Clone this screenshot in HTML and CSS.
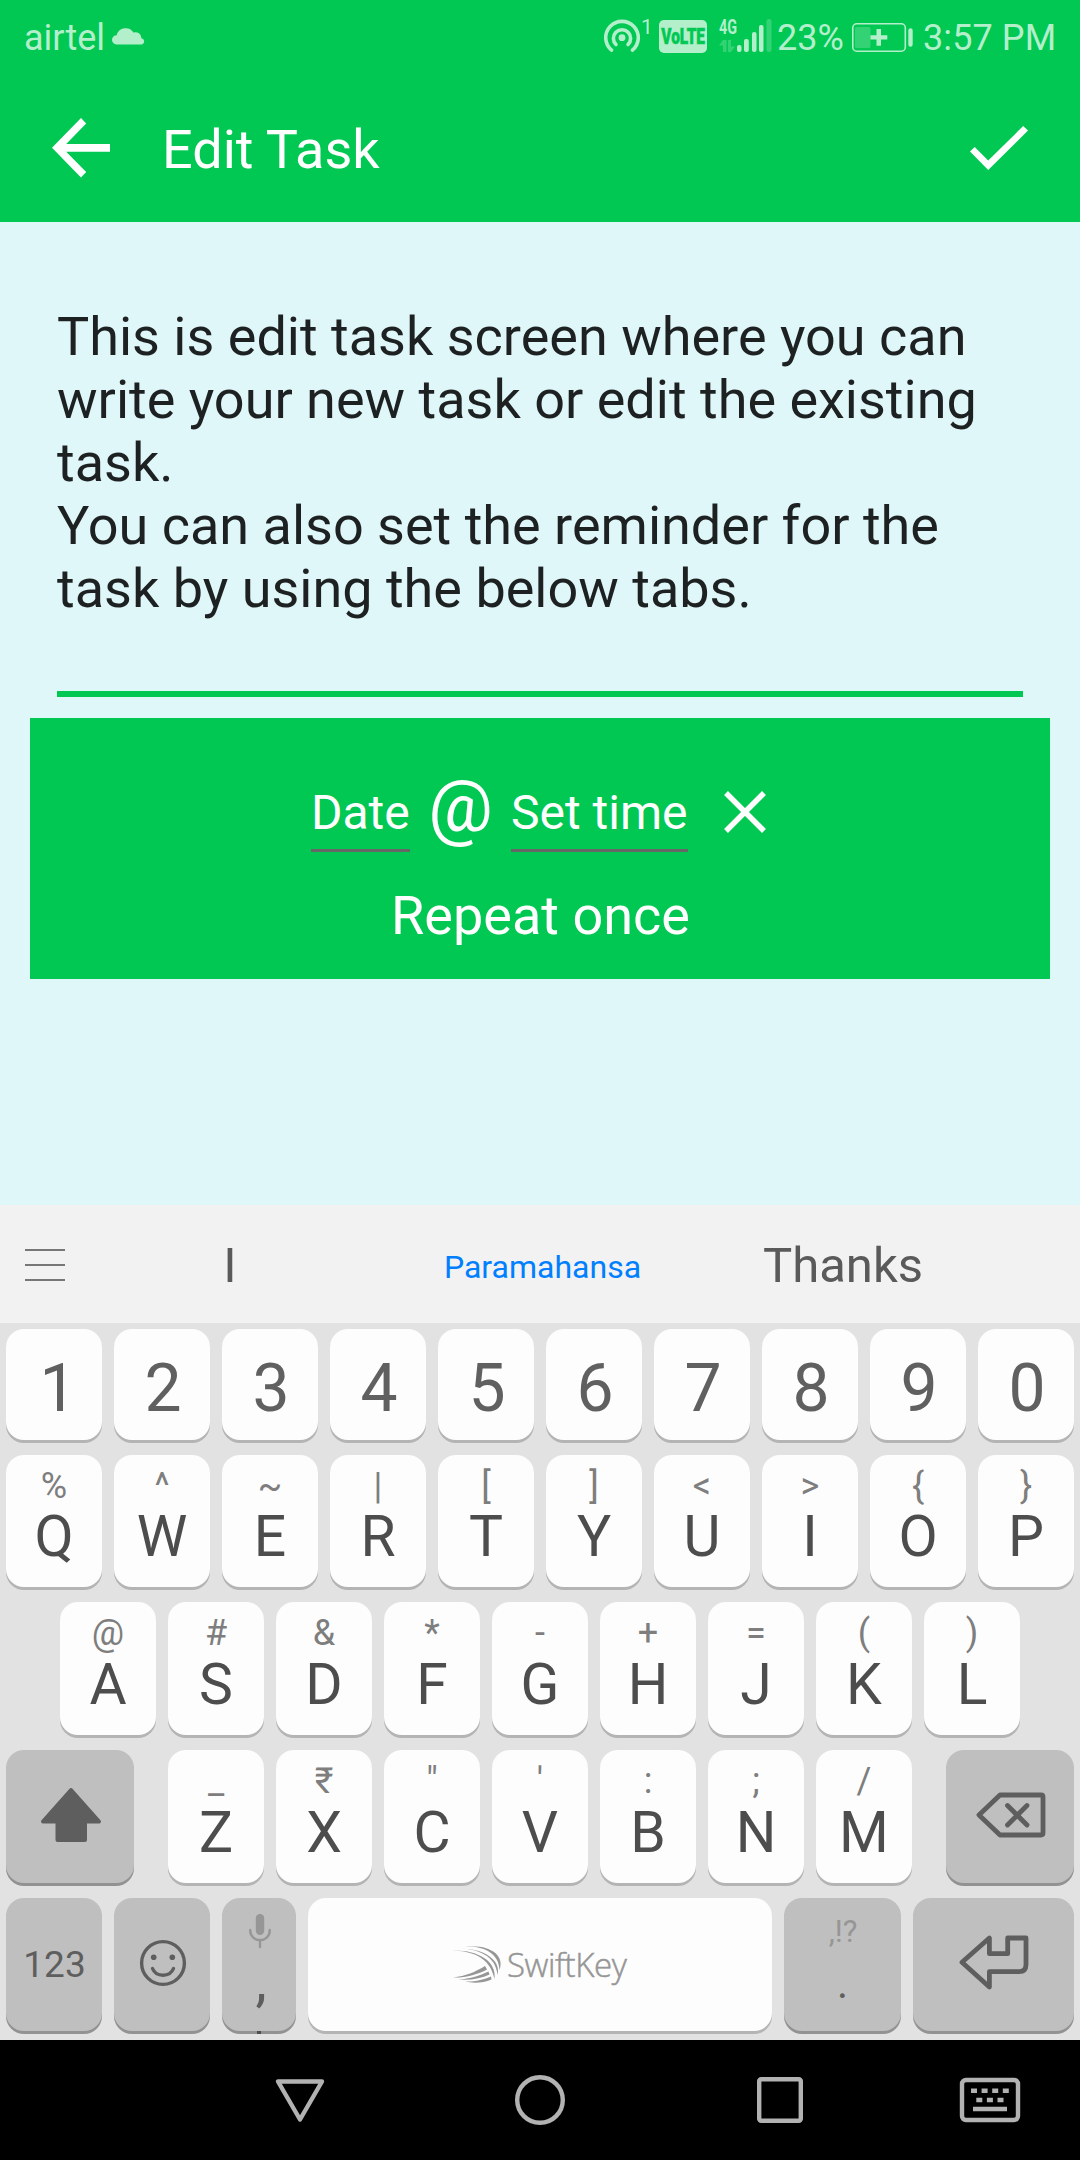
FILE: index.html
```html
<!DOCTYPE html>
<html lang="en">
<head>
<meta charset="utf-8">
<title>Edit Task</title>
<link rel="stylesheet" href="styles.css">
</head>
<body>
<div class="screen">
  <header class="header">
    <div class="status-bar">
      <span class="carrier">airtel</span>
      <svg class="cloud" viewBox="0 0 33 18"><path d="M4.500 18.500A4.600 4.600 0 0 1 4.700 9.300A9.200 9.200 0 0 1 21.500 6.600A6 6 0 0 1 29.500 12.300A3.200 3.200 0 0 1 30 18.500Z"/></svg>
      <svg class="hotspot" viewBox="0 0 36 35">
        <g fill="none" stroke-width="3.600" stroke-linecap="round"><path d="M7.600 31.200A16.300 16.300 0 1 1 28.400 31.200"/><path d="M12 25.500A8.600 8.600 0 1 1 24 25.500"/></g><circle cx="18" cy="18.700" r="3.400" class="fill"/>
      </svg>
      <span class="hotspot-count">1</span>
      <span class="volte"><span class="volte-text">VoLTE</span></span>
      <svg class="signal" viewBox="0 0 53 36">
        <text x="0" y="16" textLength="18" lengthAdjust="spacingAndGlyphs">4G</text>
        <g class="faint"><path d="M0 27.500L4 22H7.500V34H4V27.500ZM9 22H12V28.500H16L12 34H9Z"/><rect x="47.500" y="1" width="5" height="33" rx="2.500"/></g>
        <rect x="18" y="27" width="4.500" height="7" rx="2"/><rect x="25" y="21" width="4.800" height="13" rx="2"/><rect x="33" y="14" width="4.500" height="20" rx="2"/><rect x="40" y="7" width="4.500" height="27" rx="2"/>
      </svg>
      <span class="percent">23%</span>
      <svg class="battery" viewBox="0 0 61 29">
        <rect x=".8" y=".8" width="52.500" height="27.400" rx="4" fill="none" stroke-width="1.600"/><rect class="faint" x="3" y="4" width="15.500" height="21" rx="1.500"/>
        <path class="fill" d="M24.500 6H29V12.200H35.300V16.600H29V22.700H24.500V16.600H18.500V12.200H24.500ZM56.300 7.500a2.200 2.200 0 0 1 4.400 0v14a2.200 2.200 0 0 1-4.400 0Z"/>
      </svg>
      <span class="clock">3:57 PM</span>
    </div>
    <div class="app-bar">
      <svg class="back" viewBox="0 0 58 60"><path d="M58 26H14.200L34.200 5.500L29 0L0 29.800L29 59.500L34.200 54L14.200 33.800H58Z"/></svg>
      <h1 class="title">Edit Task</h1>
      <svg class="check" viewBox="0 0 58 44"><path d="M18.200 34.500L4.700 21L0 25.500L18.200 44L58 4.500L53.200 0Z"/></svg>
    </div>
  </header>

  <main class="content">
    <div class="task-text">This is edit task screen where you can<br>write your new task or edit the existing<br>task.<br>You can also set the reminder for the<br>task by using the below tabs.</div>
    <section class="reminder">
      <div class="when">
        <span class="field date">Date</span>
        <span class="at">@</span>
        <span class="field time">Set time</span>
        <svg class="close" viewBox="0 0 42 42"><path d="M2 2L40 40M40 2L2 40"/></svg>
      </div>
      <div class="repeat">Repeat once</div>
    </section>
  </main>

  <section class="keyboard">
    <div class="suggestions">
      <svg class="menu" viewBox="0 0 40 33"><path d="M0 1H40M0 16H40M0 31H40"/></svg>
      <span class="word first">I</span>
      <span class="word main-word">Paramahansa</span>
      <span class="word last">Thanks</span>
    </div>
    <div class="row digits">
      <div class="key one">1</div><div class="key">2</div><div class="key">3</div><div class="key">4</div><div class="key">5</div><div class="key">6</div><div class="key">7</div><div class="key">8</div><div class="key">9</div><div class="key">0</div>
    </div>
    <div class="row top">
      <div class="key"><i>%</i><b>Q</b></div><div class="key"><i>^</i><b>W</b></div><div class="key"><i>~</i><b>E</b></div><div class="key"><i>|</i><b>R</b></div><div class="key"><i>[</i><b>T</b></div><div class="key"><i>]</i><b>Y</b></div><div class="key"><i>&lt;</i><b>U</b></div><div class="key"><i>&gt;</i><b>I</b></div><div class="key"><i>{</i><b>O</b></div><div class="key"><i>}</i><b>P</b></div>
    </div>
    <div class="row home">
      <div class="key"><i>@</i><b>A</b></div><div class="key"><i>#</i><b>S</b></div><div class="key"><i>&amp;</i><b>D</b></div><div class="key"><i>*</i><b>F</b></div><div class="key"><i>-</i><b>G</b></div><div class="key"><i>+</i><b>H</b></div><div class="key"><i>=</i><b>J</b></div><div class="key"><i>(</i><b>K</b></div><div class="key"><i>)</i><b>L</b></div>
    </div>
    <div class="row lower">
      <div class="key dark wide"><svg class="shift" viewBox="0 0 60 54"><path d="M30 2L58 33.500H44V52H16.500V33.500H2Z"/></svg></div>
      <div class="letters">
        <div class="key"><i>_</i><b>Z</b></div><div class="key"><i>₹</i><b>X</b></div><div class="key"><i>"</i><b>C</b></div><div class="key"><i>'</i><b>V</b></div><div class="key"><i>:</i><b>B</b></div><div class="key"><i>;</i><b>N</b></div><div class="key"><i>/</i><b>M</b></div>
      </div>
      <div class="key dark wide"><svg class="backspace" viewBox="0 0 68 44"><path d="M2 22L23 2H64Q66 2 66 4V40Q66 42 64 42H23ZM30.500 12.500L50 32M50 12.500L30.500 32"/></svg></div>
    </div>
    <div class="row bottom">
      <div class="key dark numeric">123</div>
      <div class="key dark"><svg class="smiley" viewBox="0 0 46 46"><circle cx="23" cy="23" r="21.400"/><path d="M12.500 28.500C16 37.500 30 37.500 33.500 28.500"/><g class="eyes"><circle cx="13.700" cy="17.300" r="2.800"/><circle cx="32.300" cy="17.300" r="2.800"/></g></svg></div>
      <div class="key dark comma"><svg class="mic" viewBox="0 0 22 34"><rect x="6.800" y="0" width="8.400" height="21" rx="4.200"/><path d="M1.200 16C1.200 29.500 20.800 29.500 20.800 16M11 26V33"/></svg><b>,</b><span class="tick"></span></div>
      <div class="key space">
        <svg class="swift" viewBox="0 0 50 37"><path d="M0 4.500C17 5 37 10 41.500 33C44 15 25 4 0 4.500ZM5.500 2.500C25 2.500 43 10 44.500 29C49 13 28 1.500 5.500 2.500ZM12 .6C32 0 46 8 46.500 24C52 10 38-2 12 .6ZM0 31.500C13 30 22 26 32 20L34 23.500C25 28.500 12 32 0 31.500ZM5.500 33.500C17 33 28 29 35.500 25.500L36.500 28.500C28 32.500 18 34.500 5.500 33.500ZM12 35.500C22 36 31 33.500 38 30.500L38.500 33.500C30 37 20 37.500 12 35.500Z"/></svg>
        <span class="brand">SwiftKey</span>
      </div>
      <div class="key dark period"><i>,!?</i><b>.</b></div>
      <div class="key dark enter"><svg class="return" viewBox="0 0 70 54"><path d="M3 26.300L30.400 2V17.700H48.700V2H67V28.500Q67 35.700 60 35.700H30.400V51Z"/></svg></div>
    </div>
  </section>

  <nav class="nav-bar">
    <svg class="nav-back" viewBox="0 0 50 43"><path d="M3 2.500H47L25 40.500Z"/></svg>
    <svg class="nav-home" viewBox="0 0 50 50"><circle cx="25" cy="25" r="22.800"/></svg>
    <svg class="nav-recent" viewBox="0 0 46 46"><rect x="2.200" y="2.200" width="41.600" height="41.600" rx="2"/></svg>
    <svg class="nav-ime" viewBox="0 0 60 44"><rect x="2" y="2" width="56" height="40" rx="4"/><path d="M11 12.800H49" stroke-dasharray="6 4.600"/><path d="M16.300 22H44" stroke-dasharray="6 4.600"/><path d="M13 31H47"/></svg>
  </nav>
</div>
</body>
</html>
```
FILE: styles.css
```css
* { box-sizing: border-box; }
body { margin: 0; font-family: Roboto, sans-serif; background: #000; }
svg { display: block; flex: none; overflow: visible; }
i, b { font-style: normal; font-weight: 400; }

.screen { display: flex; flex-direction: column; width: 1080px; height: 2160px; background: #e0f7fa; overflow: hidden; }

/* header */
.header { height: 222px; background: #00c853; color: #fff; }
.status-bar { display: flex; align-items: flex-start; height: 75px; padding-left: 24px; font-size: 36px; line-height: 77px; color: #b3efcb; white-space: nowrap; fill: #b3efcb; }
.status-bar .faint { fill: #33d375; stroke: none; }
.carrier { width: 88px; }
.cloud { width: 33px; height: 18px; margin-top: 26px; }
.hotspot { width: 36px; height: 35px; margin: 19px 0 0 459px; stroke: #b3efcb; }
.hotspot .fill, .battery .fill { stroke: none; }
.hotspot-count { width: 18px; margin-left: 1px; font-size: 21px; line-height: 54px; }
.volte { display: flex; justify-content: center; width: 48px; height: 33px; margin: 20px 12px 0 0; border-radius: 5px; background: #b3efcb; color: #00c853; }
.volte-text { font-size: 22px; font-weight: 900; line-height: 33px; transform: scaleX(.7); -webkit-text-stroke: .6px #00c853; }
.signal { width: 53px; height: 36px; margin-top: 18px; }
.signal text { font-size: 21px; font-weight: 700; }
.percent { width: 75px; margin-left: 5px; }
.battery { width: 61px; height: 29px; margin-top: 23px; stroke: #b3efcb; }
.clock { margin-left: 10px; letter-spacing: .1px; }

.app-bar { display: flex; align-items: center; height: 147px; padding: 0 52px; fill: #fff; }
.back { width: 58px; height: 60px; margin-top: -2px; }
.title { flex: 1; margin: 2px 0 0 52px; font-size: 54px; font-weight: 400; line-height: 64px; }
.check { width: 58px; height: 44px; margin-top: -1px; }

/* task editor */
.content { height: 983px; padding: 83px 30px 0; }
.task-text { height: 392px; margin: 0 27px; border-bottom: 6px solid #00c853; font-size: 54px; line-height: 63px; color: #1d2122; white-space: nowrap; }
.reminder { height: 261px; margin-top: 21px; background: #00c853; color: #fff; }
.when { display: flex; align-items: flex-start; height: 163px; padding-left: 281px; white-space: nowrap; }
.field { height: 92px; margin-top: 42px; border-bottom: 3px solid #666; font-size: 48px; line-height: 105px; }
.date { width: 99px; }
.at { width: 67px; margin: 42px 17px 0; font-size: 72px; line-height: 94px; text-align: center; }
.time { width: 177px; }
.close { width: 42px; height: 42px; margin: 73px 0 0 36px; stroke: #fff; stroke-width: 5.500; }
.repeat { margin-top: 3px; padding-left: 1px; font-size: 54px; line-height: 64px; text-align: center; }

/* keyboard */
.keyboard { height: 835px; background: #e2e2e2; }
.suggestions { display: flex; height: 118px; padding-left: 25px; background: #f2f2f2; color: #5a5a5a; white-space: nowrap; }
.menu { width: 40px; height: 33px; margin-top: 44px; stroke: #777; stroke-width: 2; }
.word { font-size: 49px; line-height: 122px; text-align: center; }
.first { width: 330px; }
.main-word { width: 295px; font-size: 32px; line-height: 125px; color: #007fff; }
.last { width: 306px; }

.row { display: flex; gap: 12px; height: 133px; margin-bottom: 15px; padding: 0 6px; }
.letters { display: flex; gap: 12px; }
.key { display: flex; flex-direction: column; align-items: center; flex: none; width: 96px; height: 100%; border-radius: 18px; background: #fdfdfd; box-shadow: 0 3px 0 #b4b4b4; color: #4d4d4d; }
.key i { height: 60px; font-size: 36px; line-height: 62px; color: #7e7e7e; }
.key b { font-size: 57px; line-height: 45px; }
.digits { height: 117px; padding-top: 6px; }
.digits .key { padding: 8px 0 0 2px; font-size: 66px; line-height: 103px; color: #606060; }
.digits .one { padding-left: 8px; }
.top { height: 132px; }
.top i { height: 59px; }
.home { padding: 0 30px; justify-content: center; }
.lower { justify-content: space-between; }
.bottom { margin-bottom: 0; }
.dark { background: #bfbfbf; box-shadow: 0 3px 0 #929292; color: #5e5e5e; }
.wide { width: 128px; }
.shift { width: 60px; height: 54px; margin: 38px 0 0 2px; fill: #5e5e5e; stroke: #5e5e5e; stroke-width: 4; stroke-linejoin: round; }
.backspace, .return, .smiley { fill: none; stroke: #5e5e5e; stroke-width: 4.800; stroke-linecap: round; stroke-linejoin: round; }
.backspace { width: 68px; height: 44px; margin: 43px 0 0 1px; }
.numeric { padding-left: 1px; font-size: 37px; line-height: 133px; }
.smiley { width: 46px; height: 46px; margin: 42px 0 0 2px; stroke-width: 3.400; }
.eyes { fill: #5e5e5e; stroke: none; }
.comma { width: 74px; }
.mic { width: 22px; height: 34px; margin: 16px 0 10px 2px; fill: #969696; }
.mic path { fill: none; stroke: #969696; stroke-width: 2.400; stroke-linecap: round; }
.comma b { padding-left: 4px; }
.tick { flex: none; width: 4px; height: 3px; margin-top: 28px; background: #4d4d4d; }
.space { flex-direction: row; width: 464px; padding: 0 0 0 145px; }
.swift { width: 50px; height: 37px; fill: #969696; }
.brand { margin-left: 4px; font-family: "Open Sans", "Noto Sans", sans-serif; font-size: 33px; font-weight: 350; line-height: 60px; color: #969696; letter-spacing: -.4px; -webkit-text-stroke: .5px #969696; }
.period { width: 117px; }
.period i { height: 60px; padding-left: 1px; font-size: 31px; line-height: 67px; color: #969696; }
.period b { font-size: 42px; line-height: 51px; }
.enter { width: 161px; }
.return { width: 70px; height: 54px; margin: 38px 0 0 1px; }

/* system navigation */
.nav-bar { display: flex; align-items: center; height: 120px; padding-left: 275px; background: #000; fill: none; stroke: #b2b2b2; stroke-width: 4.400; stroke-linejoin: round; }
.nav-back { width: 50px; height: 43px; }
.nav-home { width: 50px; height: 50px; margin-left: 190px; }
.nav-recent { width: 46px; height: 46px; margin-left: 192px; }
.nav-ime { width: 60px; height: 44px; margin-left: 157px; }
```
